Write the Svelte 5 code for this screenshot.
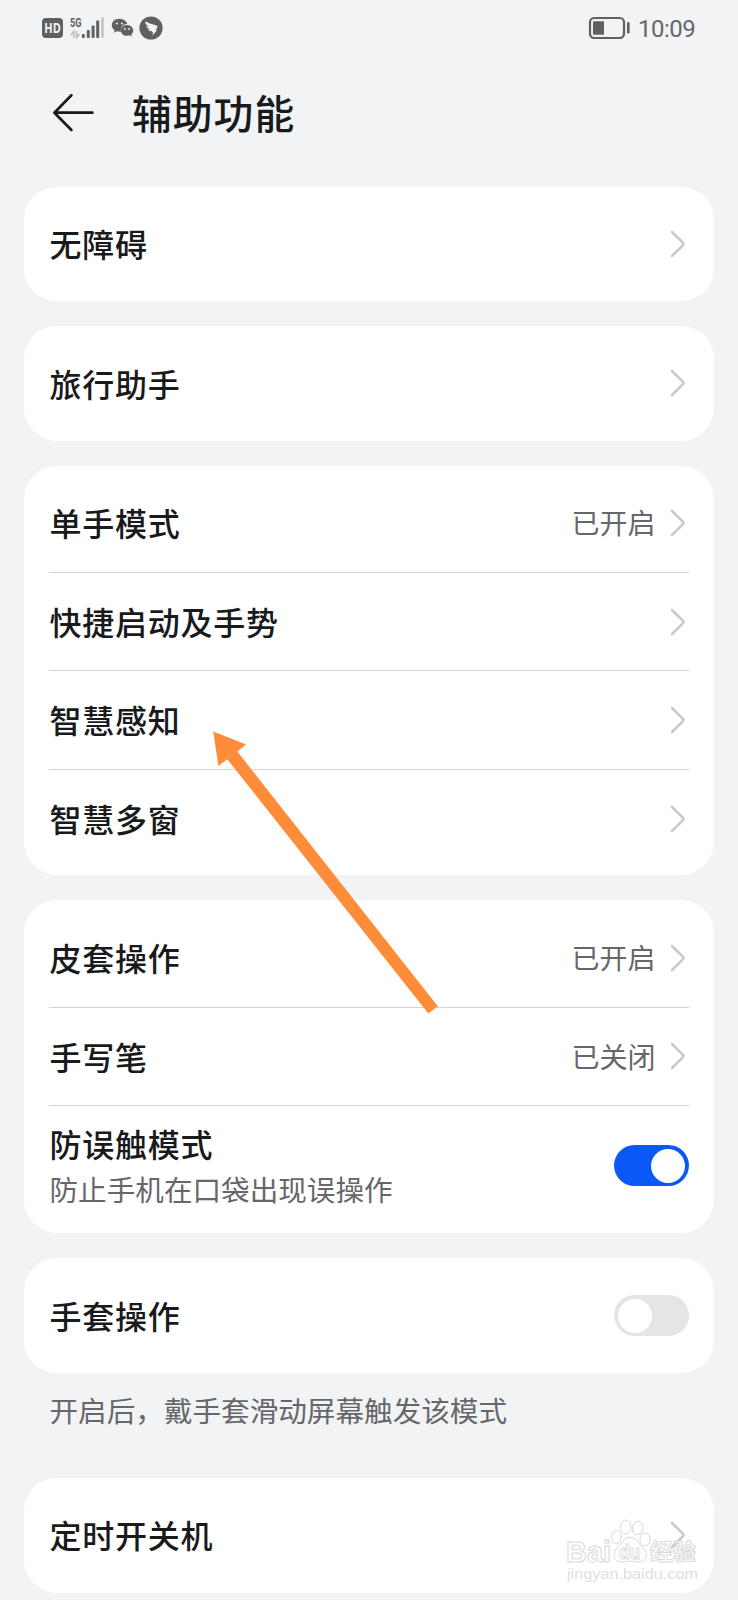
<script>
  const groups = [
    { rows: [{ title: '无障碍' }] },
    { rows: [{ title: '旅行助手' }] },
    {
      rows: [
        { title: '单手模式', value: '已开启' },
        { title: '快捷启动及手势' },
        { title: '智慧感知' },
        { title: '智慧多窗' }
      ]
    },
    {
      rows: [
        { title: '皮套操作', value: '已开启' },
        { title: '手写笔', value: '已关闭' },
        { title: '防误触模式', sub: '防止手机在口袋出现误操作', on: true }
      ]
    },
    { rows: [{ title: '手套操作', on: false }], note: '开启后，戴手套滑动屏幕触发该模式' },
    { rows: [{ title: '定时开关机' }] }
  ];
</script>

<div class="screen">
  <header class="status">
    <svg class="signals" width="130" height="26" viewBox="40 15 130 26">
      <rect x="42" y="18" width="21" height="20" rx="4" fill="#5f6062" />
      <text x="52.5" y="32.8" text-anchor="middle" textLength="16.5" lengthAdjust="spacingAndGlyphs" class="hd">HD</text>
      <text x="70" y="26.6" textLength="11.5" lengthAdjust="spacingAndGlyphs" class="net">5G</text>
      <g stroke="#bfc0c2" stroke-width="1.7" fill="none">
        <path d="M73.8 38V31.5L70.8 35M76.6 31V37.5L79.6 34" />
      </g>
      <g fill="#5f6062">
        <rect x="81.8" y="34" width="3" height="4" rx="1" />
        <rect x="86.8" y="30" width="3" height="8" rx="1" />
        <rect x="91.6" y="25.5" width="3" height="12.5" rx="1" />
        <rect x="96.2" y="20.5" width="3" height="17.5" rx="1" />
        <rect x="101.2" y="17" width="2.6" height="21" rx="1" fill="#c3c4c6" />
      </g>
      <path fill="#5f6062" d="M119.3 18.8C115 18.8 111.8 21.6 111.8 25.2C111.8 27.3 112.9 29 114.6 30.2L113.9 32.8L116.8 31.3C118.4 31.7 119.5 31.8 121 31.7C119.8 27.2 123.6 23.8 127.1 24C126.4 20.9 123.2 18.8 119.3 18.8Z" />
      <path fill="#5f6062" d="M126.9 25C123.2 25 120.8 27.5 120.8 30.4C120.8 33.4 123.4 35.7 126.9 35.7C127.8 35.7 128.6 35.6 129.4 35.3L131.8 36.6L131.2 34.4C132.5 33.4 133.2 32 133.2 30.4C133.2 27.5 130.5 25 126.9 25Z" />
      <g fill="#f1f3f5">
        <circle cx="116.8" cy="23.5" r="1" />
        <circle cx="121.9" cy="23.5" r="1" />
        <circle cx="124.8" cy="29" r="0.9" />
        <circle cx="129" cy="29" r="0.9" />
      </g>
      <circle cx="151" cy="28" r="11.6" fill="#5f6062" />
      <path fill="#f5f6f7" d="M145 21.2C148.5 23.3 152 24 156.6 25.6C157.9 26.2 157.5 27.2 156.9 28.2L155.6 30.1H157.1L152.3 35.8L153.2 32.2H151.5L152 30.7C150.2 31.1 149 31 148 29.7L150.7 29C148.3 28.9 147.1 28.2 146.3 26.3L149.9 26.5C147.2 25.7 145.6 24.7 145 21.2Z" />
    </svg>
    <div class="right">
      <svg width="43" height="24" viewBox="588 15 43 24">
        <rect x="590" y="18" width="34" height="20" rx="4.2" fill="none" stroke="#5f6062" stroke-width="2.2" />
        <rect x="593" y="21.3" width="11" height="13.5" rx="1" fill="#5f6062" />
        <rect x="627" y="22" width="2.6" height="11.5" rx="1.2" fill="#5f6062" />
      </svg>
      <span class="time">10:09</span>
    </div>
  </header>

  <div class="titlebar">
    <svg class="back" width="44" height="40" viewBox="52 93 44 40" fill="none" stroke="#191a1c" stroke-width="2.7" stroke-linecap="round" stroke-linejoin="round">
      <path d="M71.4 95.2L54.4 112.7L71.4 130M54.4 112.7H92.4" />
    </svg>
    <h1>辅助功能</h1>
  </div>

  <main>
    {#each groups as group}
      <section>
        <div class="card">
          {#each group.rows as row}
            <div class="row" class:tall={row.sub}>
              <div class="label">
                <span class="name">{row.title}</span>
                {#if row.sub}<span class="sub">{row.sub}</span>{/if}
              </div>
              {#if row.value}<span class="value">{row.value}</span>{/if}
              {#if row.on === undefined}
                <svg class="chev" width="16" height="28" viewBox="0 0 16 28" fill="none" stroke="#c9c9c9" stroke-width="2.6" stroke-linecap="round" stroke-linejoin="round">
                  <path d="M2 2L12.8 12.6Q14 14 12.8 15.4L2 26" />
                </svg>
              {:else}
                <span class="switch" class:on={row.on}><i></i></span>
              {/if}
            </div>
          {/each}
        </div>
        {#if group.note}<p class="note">{group.note}</p>{/if}
      </section>
    {/each}
  </main>

  <svg class="pointer" width="738" height="1600" viewBox="0 0 738 1600">
    <polygon fill="#ff8c38" points="213.2,731.4 246,744.6 237.4,751.6 437.8,1006.3 428.3,1013.5 227.3,759.3 218.4,766" />
  </svg>

  <svg class="mark" width="146" height="72" viewBox="560 1514 146 72">
    <g fill="#fff" stroke="#d4d4d4" stroke-width="1">
      <text x="566" y="1561.5" textLength="45" lengthAdjust="spacingAndGlyphs" class="brand">Bai</text>
      <ellipse cx="616.5" cy="1537" rx="5" ry="6.7" />
      <ellipse cx="625.7" cy="1527" rx="5.2" ry="7" />
      <ellipse cx="637.7" cy="1528" rx="5.2" ry="6.8" transform="rotate(12 637.7 1528)" />
      <ellipse cx="645" cy="1539.5" rx="5.2" ry="6.5" />
      <path d="M630 1537.5C636 1537.5 638 1543 642 1547C650 1554 646 1562.5 638 1562C633 1561 627 1561 623 1562C614 1563 611 1554 618 1547C623 1542 624 1537.5 630 1537.5Z" />
      <text x="619" y="1559" textLength="21" lengthAdjust="spacingAndGlyphs" class="du">du</text>
      <text x="650" y="1559.5" textLength="46" lengthAdjust="spacingAndGlyphs" class="cn">经验</text>
    </g>
    <text x="567" y="1579" textLength="131" lengthAdjust="spacingAndGlyphs" class="url">jingyan.baidu.com</text>
  </svg>
</div>

<style>
  :global(body) {
    margin: 0;
    background: #f1f3f5;
  }
  .screen {
    position: relative;
    box-sizing: border-box;
    width: 738px;
    height: 1600px;
    overflow: hidden;
    background: #f1f3f5;
    color: #191a1c;
    font-family: 'Noto Sans CJK SC', sans-serif;
  }
  .status {
    display: flex;
    justify-content: space-between;
    box-sizing: border-box;
    height: 56px;
    padding: 15px 42px 0 40px;
  }
  .hd {
    font: 700 13.5px 'Open Sans', sans-serif;
    fill: #f1f3f5;
  }
  .net {
    font: 700 13px Roboto, sans-serif;
    fill: #5f6062;
  }
  .right {
    display: flex;
    gap: 7px;
  }
  .time {
    width: 58px;
    font: 400 24px/28px Roboto, sans-serif;
    letter-spacing: -0.5px;
    color: #66676a;
  }
  .titlebar {
    display: flex;
    align-items: center;
    gap: 36px;
    box-sizing: border-box;
    height: 130.5px;
    padding: 0 52px 17px;
  }
  h1 {
    margin: 0;
    font-size: 39.8px;
    font-weight: 500;
    line-height: 58px;
    letter-spacing: 1px;
    padding-bottom: 2px;
  }
  main {
    display: flex;
    flex-direction: column;
    gap: 25px;
    padding: 0 24px;
  }
  .card {
    box-sizing: border-box;
    padding: 8px 25px 8.2px;
    border-radius: 33px;
    background: #fff;
  }
  .row {
    display: flex;
    align-items: center;
    box-sizing: border-box;
    height: 98.4px;
  }
  .row + .row {
    border-top: 1px solid #d3d3d3;
  }
  .row.tall {
    height: 120px;
  }
  .label {
    display: flex;
    flex: 1;
    flex-direction: column;
    padding: 0 0 1.5px 0.5px;
  }
  .name {
    font-size: 32px;
    font-weight: 500;
    line-height: 48px;
    letter-spacing: 0.75px;
  }
  .sub {
    font-size: 28.6px;
    line-height: 43px;
    color: #66676a;
  }
  .value {
    margin-right: 14px;
    padding-bottom: 1px;
    font-size: 28px;
    line-height: 42px;
    color: #66676a;
  }
  .chev {
    margin-right: 3.5px;
  }
  .switch {
    box-sizing: border-box;
    width: 75.5px;
    height: 41px;
    padding: 3.5px 4px;
    border-radius: 21px;
    background: #e5e5e5;
  }
  .switch i {
    display: block;
    width: 34px;
    height: 34px;
    border-radius: 50%;
    background: #fff;
  }
  .switch.on {
    background: #0a59f7;
  }
  .switch.on i {
    margin-left: auto;
  }
  .note {
    margin: 15.5px 25.5px 21.5px;
    font-size: 28.6px;
    line-height: 43px;
    color: #66676a;
  }
  .pointer {
    position: absolute;
    top: 0;
    left: 0;
  }
  .mark {
    position: absolute;
    left: 560px;
    top: 1514px;
    opacity: 0.85;
  }
  .brand {
    font: 700 29px 'Liberation Sans', sans-serif;
  }
  .du {
    font: 700 20px 'Liberation Sans', sans-serif;
  }
  .cn {
    font: 700 23px 'Noto Sans CJK SC', sans-serif;
  }
  .url {
    font: 400 15px 'Liberation Sans', sans-serif;
    fill: #dadada;
  }
</style>
